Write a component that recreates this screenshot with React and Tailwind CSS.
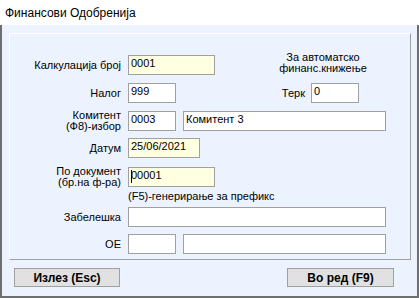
import React from 'react';

const font = { fontFamily: '"Liberation Sans", Arial, sans-serif' };

function Box({ w, value, yellow, caret }) {
  return (
    <div
      className={`relative h-[20px] shrink-0 border border-[#a0a0a0] pl-[2px] pt-[2px] text-[11px] leading-[11px] text-black whitespace-nowrap ${
        yellow ? 'bg-[#ffffe1]' : 'bg-white'
      } ${w}`}
    >
      {caret && <span className="absolute left-[2px] top-[2px] h-[13px] w-px bg-black" />}
      {value}
    </div>
  );
}

function Label({ children, two }) {
  return (
    <div
      className={`w-[111px] shrink-0 text-right text-[11px] text-black ${
        two ? 'leading-[11px]' : 'leading-[13px]'
      }`}
    >
      {children}
    </div>
  );
}

export default function App() {
  return (
    <div className="w-[419px] h-[298px] flex flex-col bg-white" style={font}>
      <div className="h-[25px] shrink-0 bg-white px-[5px] flex items-center text-[12px] text-black">
        Финансови Одобренија
      </div>

      <div className="flex-1 flex flex-col bg-[#edf3fe] border-x-2 border-b-2 border-[#6f6f6f]">
        <div className="ml-[7px] mt-[8px] w-[402px] h-[227px] shrink-0 border-l border-t border-white border-r border-b border-r-[#a0a0a0] border-b-[#a0a0a0] flex flex-col">
          <div className="mt-[18px] flex items-center">
            <Label>Калкулација број</Label>
            <div className="ml-[7px]">
              <Box w="w-[87px]" value="0001" yellow />
            </div>
            <div className="ml-[58px] mb-[4px] w-[100px] text-center text-[11px] leading-[11px] text-black">
              За автоматско
              <br />
              финанс.книжење
            </div>
          </div>

          <div className="mt-[5px] flex items-center">
            <Label>Налог</Label>
            <div className="ml-[7px]">
              <Box w="w-[48px]" value="999" />
            </div>
            <div className="ml-[94px] w-[35px] text-right text-[11px] text-black">Терк</div>
            <div className="ml-[6px]">
              <Box w="w-[48px]" value="0" />
            </div>
          </div>

          <div className="mt-[7px] flex items-center">
            <Label two>
              Комитент
              <br />
              (Ф8)-избор
            </Label>
            <div className="ml-[7px] flex gap-[7px]">
              <Box w="w-[48px]" value="0003" />
              <Box w="w-[203px]" value="Комитент 3" />
            </div>
          </div>

          <div className="mt-[6px] flex items-center">
            <Label>Датум</Label>
            <div className="ml-[7px]">
              <Box w="w-[72px]" value="25/06/2021" yellow />
            </div>
          </div>

          <div className="mt-[8px] flex items-center">
            <Label two>
              По документ
              <br />
              (бр.на ф-ра)
            </Label>
            <div className="ml-[7px]">
              <Box w="w-[87px]" value="00001" yellow caret />
            </div>
          </div>

          <div className="mt-[2px] ml-[118px] text-[11px] leading-[13px] text-black">
            (F5)-генерирање за префикс
          </div>

          <div className="mt-[4px] flex items-center">
            <Label>Забелешка</Label>
            <div className="ml-[7px]">
              <Box w="w-[258px]" value="" />
            </div>
          </div>

          <div className="mt-[7px] flex items-center">
            <Label>ОЕ</Label>
            <div className="ml-[7px] flex gap-[7px]">
              <Box w="w-[48px]" value="" />
              <Box w="w-[203px]" value="" />
            </div>
          </div>
        </div>

        <div className="mt-[8px] flex justify-between pl-[12px] pr-[23px]">
          <button className="w-[106px] h-[19px] bg-[#e1e1e1] border border-[#a0a0a0] text-[12px] font-bold text-black leading-none">
            Излез (Esc)
          </button>
          <button className="w-[107px] h-[19px] bg-[#e1e1e1] border border-[#a0a0a0] text-[12px] font-bold text-black leading-none">
            Во ред (F9)
          </button>
        </div>
      </div>
    </div>
  );
}
